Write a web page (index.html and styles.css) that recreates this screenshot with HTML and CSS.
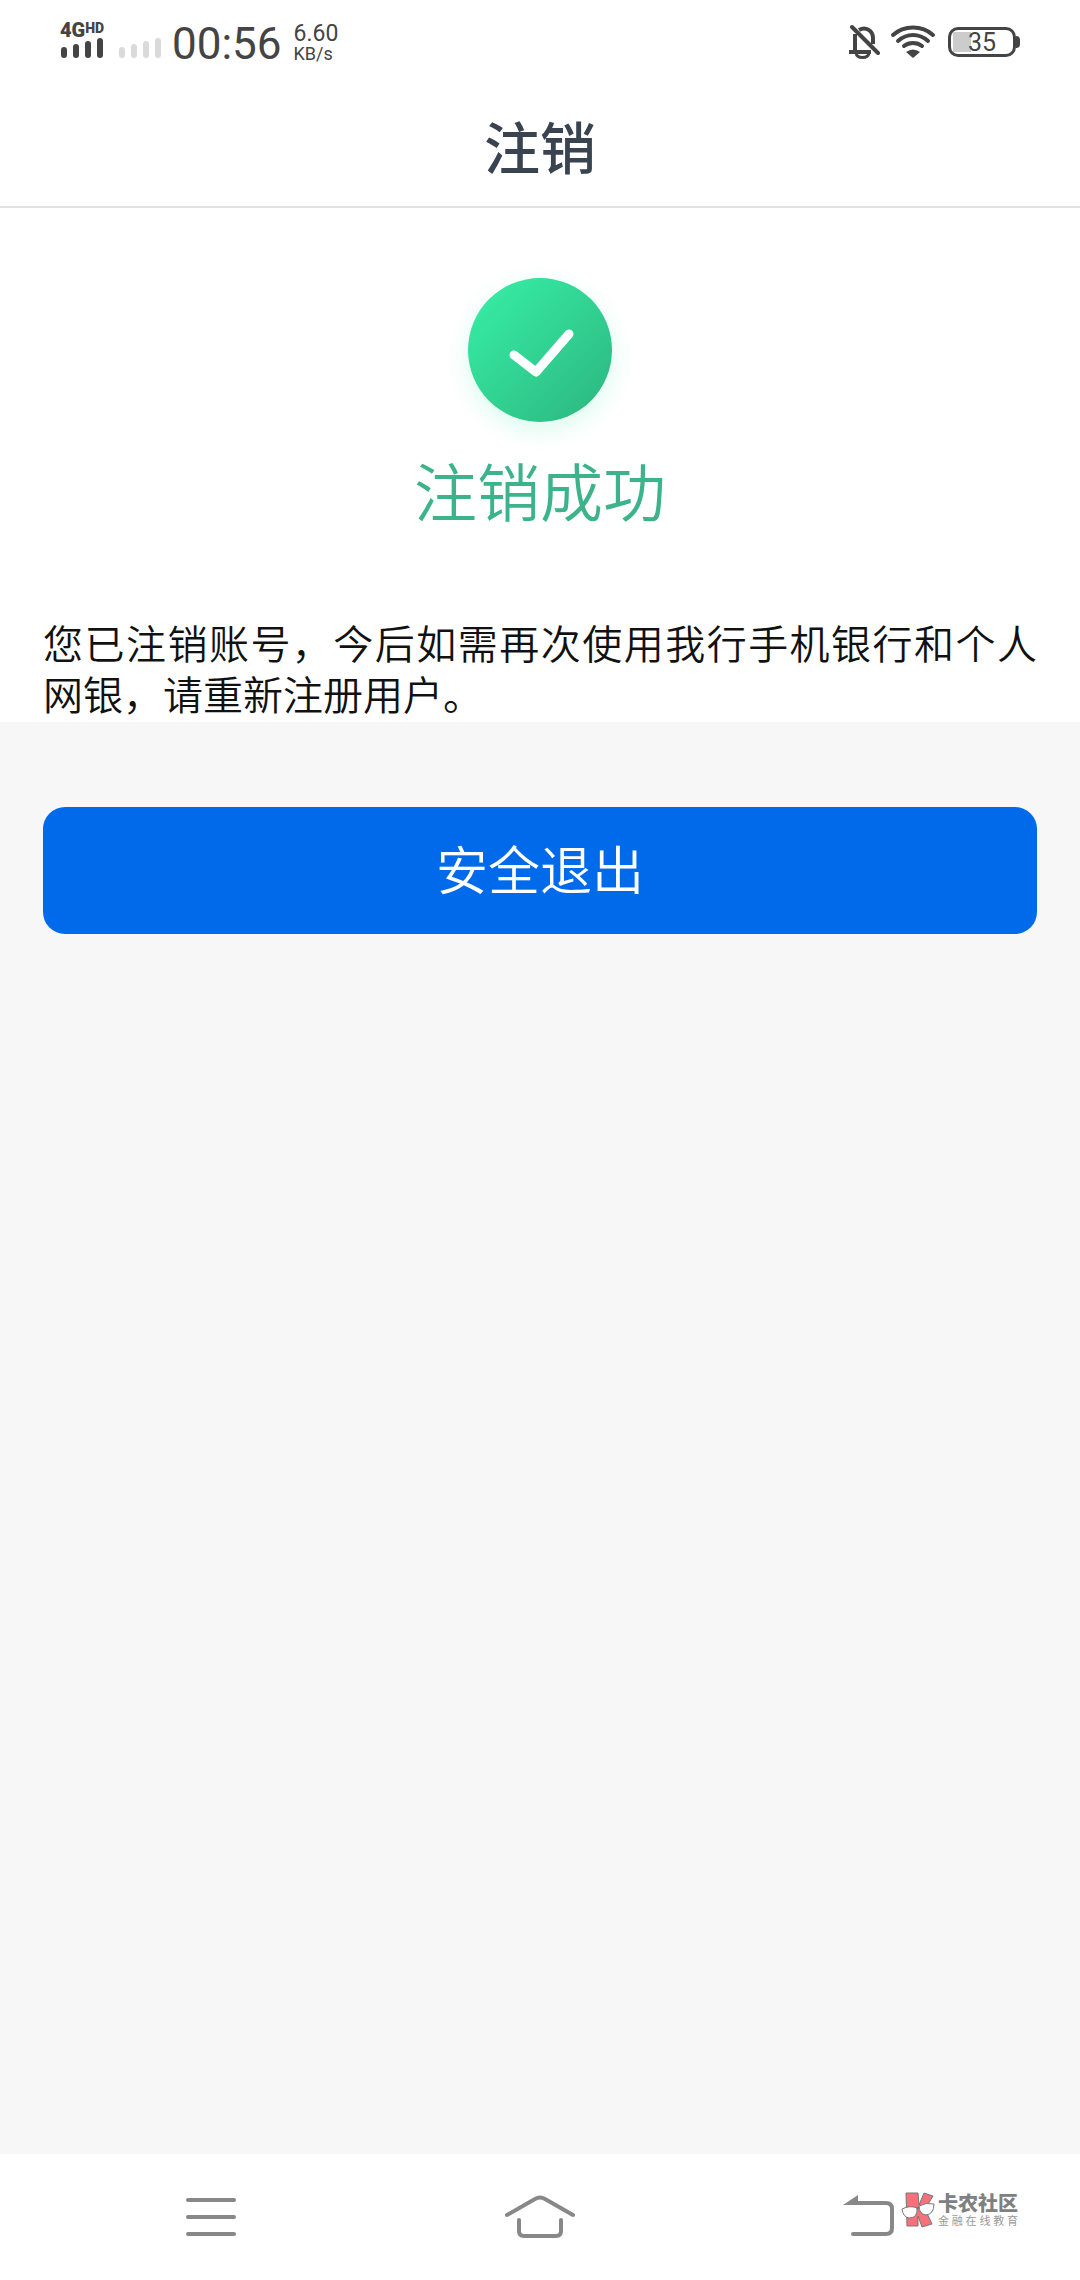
FILE: index.html
```html
<!DOCTYPE html>
<html lang="zh-CN">
<head>
<meta charset="utf-8">
<meta name="viewport" content="width=device-width, initial-scale=1">
<title>注销</title>
<link rel="stylesheet" href="styles.css">
</head>
<body>
<div class="status">
  <div class="status-left">
    <div class="signal">
      <div class="network">4G<sup>HD</sup></div>
      <svg width="44" height="20" viewBox="0 0 44 20" fill="#444"><rect x="1" y="9" width="6" height="11" rx="3"/><rect x="13" y="6" width="6" height="14" rx="3"/><rect x="25" y="3" width="6" height="17" rx="3"/><rect x="37" y="0" width="6" height="20" rx="3"/></svg>
    </div>
    <svg class="signal-two" width="44" height="20" viewBox="0 0 44 20" fill="#dadada"><rect x="1" y="9" width="6" height="11" rx="3"/><rect x="13" y="6" width="6" height="14" rx="3"/><rect x="25" y="3" width="6" height="17" rx="3"/><rect x="37" y="0" width="6" height="20" rx="3"/></svg>
    <time class="clock">00:56</time>
    <div class="speed"><span class="rate">6.60</span><span class="unit">KB/s</span></div>
  </div>
  <div class="status-right">
    <svg width="32" height="36" viewBox="0 0 32 36" fill="none" stroke="#444" stroke-width="4"><path d="M7 10V27M11 6C18 2 25 7 25 14V20M1 28H23" /><path d="M8 29C9 35 20 35 21 29" stroke-width="3"/><path d="M4 3L30 29" stroke-linecap="round"/></svg>
    <svg width="46" height="36" viewBox="0 0 46 36" fill="none" stroke="#444" stroke-width="4" stroke-linecap="round"><path d="M3 11C14 1 32 1 43 11M8 17C17 9 29 9 38 17M14 22C19 18 27 18 32 22"/><path d="M16 28Q23 23 30 28L23 34Z" fill="#444" stroke="none"/></svg>
    <div class="battery">35</div>
  </div>
</div>
<header class="title-bar"><h1>注销</h1></header>
<main>
  <section class="result">
    <div class="badge">
      <svg width="144" height="144" viewBox="0 0 144 144" fill="none" stroke="#fff" stroke-width="9" stroke-linecap="round" stroke-linejoin="round"><path d="M46 77L68 94L101 56"/></svg>
    </div>
    <h2>注销成功</h2>
    <p>您已注销账号，今后如需再次使用我行手机银行和个人网银，请重新注册用户。</p>
  </section>
  <div class="actions"><button class="exit" type="button">安全退出</button></div>
</main>
<nav class="nav">
  <button type="button" aria-label="菜单"><svg width="50" height="44" viewBox="0 0 50 44" fill="none" stroke="#888" stroke-width="4" stroke-linecap="round"><path d="M2 5H48M2 22H48M2 39H48"/></svg></button>
  <button type="button" aria-label="主页"><svg width="70" height="44" viewBox="0 0 70 44" fill="none" stroke="#888" stroke-width="4" stroke-linecap="round"><path d="M2 20L30 4Q35 1 40 4L68 20M14 25V36Q14 41 19 41H51Q56 41 56 36V25"/></svg></button>
  <button type="button" aria-label="返回"><svg width="52" height="44" viewBox="0 0 52 44" fill="none" stroke="#888" stroke-width="4" stroke-linecap="round"><path d="M10 8H43Q49 8 49 14V33Q49 39 43 39H10"/><path d="M0 10L15 0V10Z" fill="#888" stroke="none"/></svg></button>
  <div class="brand">
    <svg width="34" height="36" viewBox="0 0 34 36" stroke="#777" stroke-width="1" stroke-linejoin="round"><path d="M5 1L17 1L18 13L23 1L32 4L24 17L31 32L21 35L17 24V34H6Z" fill="#f7717a"/><path d="M1 17Q9 13 16 16Q17 26 8 26Q2 25 1 17ZM18 14Q25 10 33 12Q33 22 25 23Q18 22 18 14Z" fill="#fff"/><path d="M16 17L18 15" stroke-width="2"/></svg>
    <div class="brand-text"><strong>卡农社区</strong><small>金融在线教育</small></div>
  </div>
</nav>
</body>
</html>
```
FILE: styles.css
```css
* { box-sizing: border-box; }
body {
  margin: 0;
  min-height: 100vh;
  display: flex;
  flex-direction: column;
  background: #fff;
  color: #111;
  font-family: Roboto, "Noto Sans CJK SC", sans-serif;
}
svg { display: block; flex: none; }
h1, h2, p { margin: 0; }
button { border: 0; padding: 0; font: inherit; }

.status {
  height: 88px;
  padding: 0 60px;
  display: flex;
  justify-content: space-between;
  align-items: center;
  color: #444;
}
.status-left, .status-right { display: flex; align-items: center; }
.signal { width: 44px; padding-bottom: 8px; }
.network {
  display: flex;
  font-size: 20px;
  line-height: 16px;
  font-weight: 900;
}
.network sup { font-size: 14px; line-height: 12px; }
.signal-two { margin: 8px 10px 0 14px; }
.clock { font-size: 44px; line-height: 48px; }
.speed { margin-left: 12px; display: flex; flex-direction: column; }
.rate { font-size: 23px; line-height: 20px; }
.unit { font-size: 18px; line-height: 20px; }
.status-right { gap: 10px; padding-bottom: 4px; }
.battery {
  position: relative;
  width: 68px;
  height: 30px;
  margin: 0 4px 0 2px;
  border: 3px solid #444;
  border-radius: 10px;
  background: linear-gradient(#ccc, #ccc) 2px 2px / 18px 20px no-repeat;
  font-size: 25px;
  line-height: 25px;
  text-align: center;
}
.battery::after {
  content: "";
  position: absolute;
  right: -7px;
  top: 6px;
  width: 4px;
  height: 12px;
  border-radius: 0 4px 4px 0;
  background: #444;
}

.title-bar {
  height: 120px;
  padding-top: 6px;
  display: flex;
  justify-content: center;
  align-items: center;
  border-bottom: 2px solid #e2e2e2;
}
h1 { font-size: 56px; line-height: 80px; font-weight: 500; color: #3a4350; }

main { flex: 1; background: #f7f7f7; }
.result {
  padding: 70px 43px 0;
  display: flex;
  flex-direction: column;
  align-items: center;
  background: #fff;
}
.badge {
  border-radius: 50%;
  background: linear-gradient(135deg, #36eba3 10%, #2dbb83 90%);
  box-shadow: 0 8px 24px #36eba330;
}
h2 { margin: 28px 0 80px; font-size: 63px; line-height: 90px; font-weight: 350; color: #3cb38a; }
p { width: 100%; font-size: 40px; line-height: 51px; font-weight: 350; text-align: justify; }
.actions { padding: 85px 43px; }
.exit {
  width: 100%;
  height: 127px;
  padding-bottom: 6px;
  border-radius: 22px;
  background: #006bea;
  color: #fff;
  font-size: 52px;
  font-weight: 350;
}

.nav {
  position: relative;
  height: 126px;
  padding: 0 46px;
  display: grid;
  grid-template-columns: repeat(3, 1fr);
}
.nav button { display: flex; justify-content: center; align-items: center; background: none; }
.brand {
  position: absolute;
  right: 62px;
  top: 38px;
  display: flex;
  gap: 3px;
  color: #808080;
}
.brand-text { width: 80px; padding-top: 1px; display: flex; flex-direction: column; }
.brand strong { font-size: 20px; line-height: 22px; font-weight: 900; }
.brand small { font-size: 11px; line-height: 14px; text-align-last: justify; color: #999; }
```
